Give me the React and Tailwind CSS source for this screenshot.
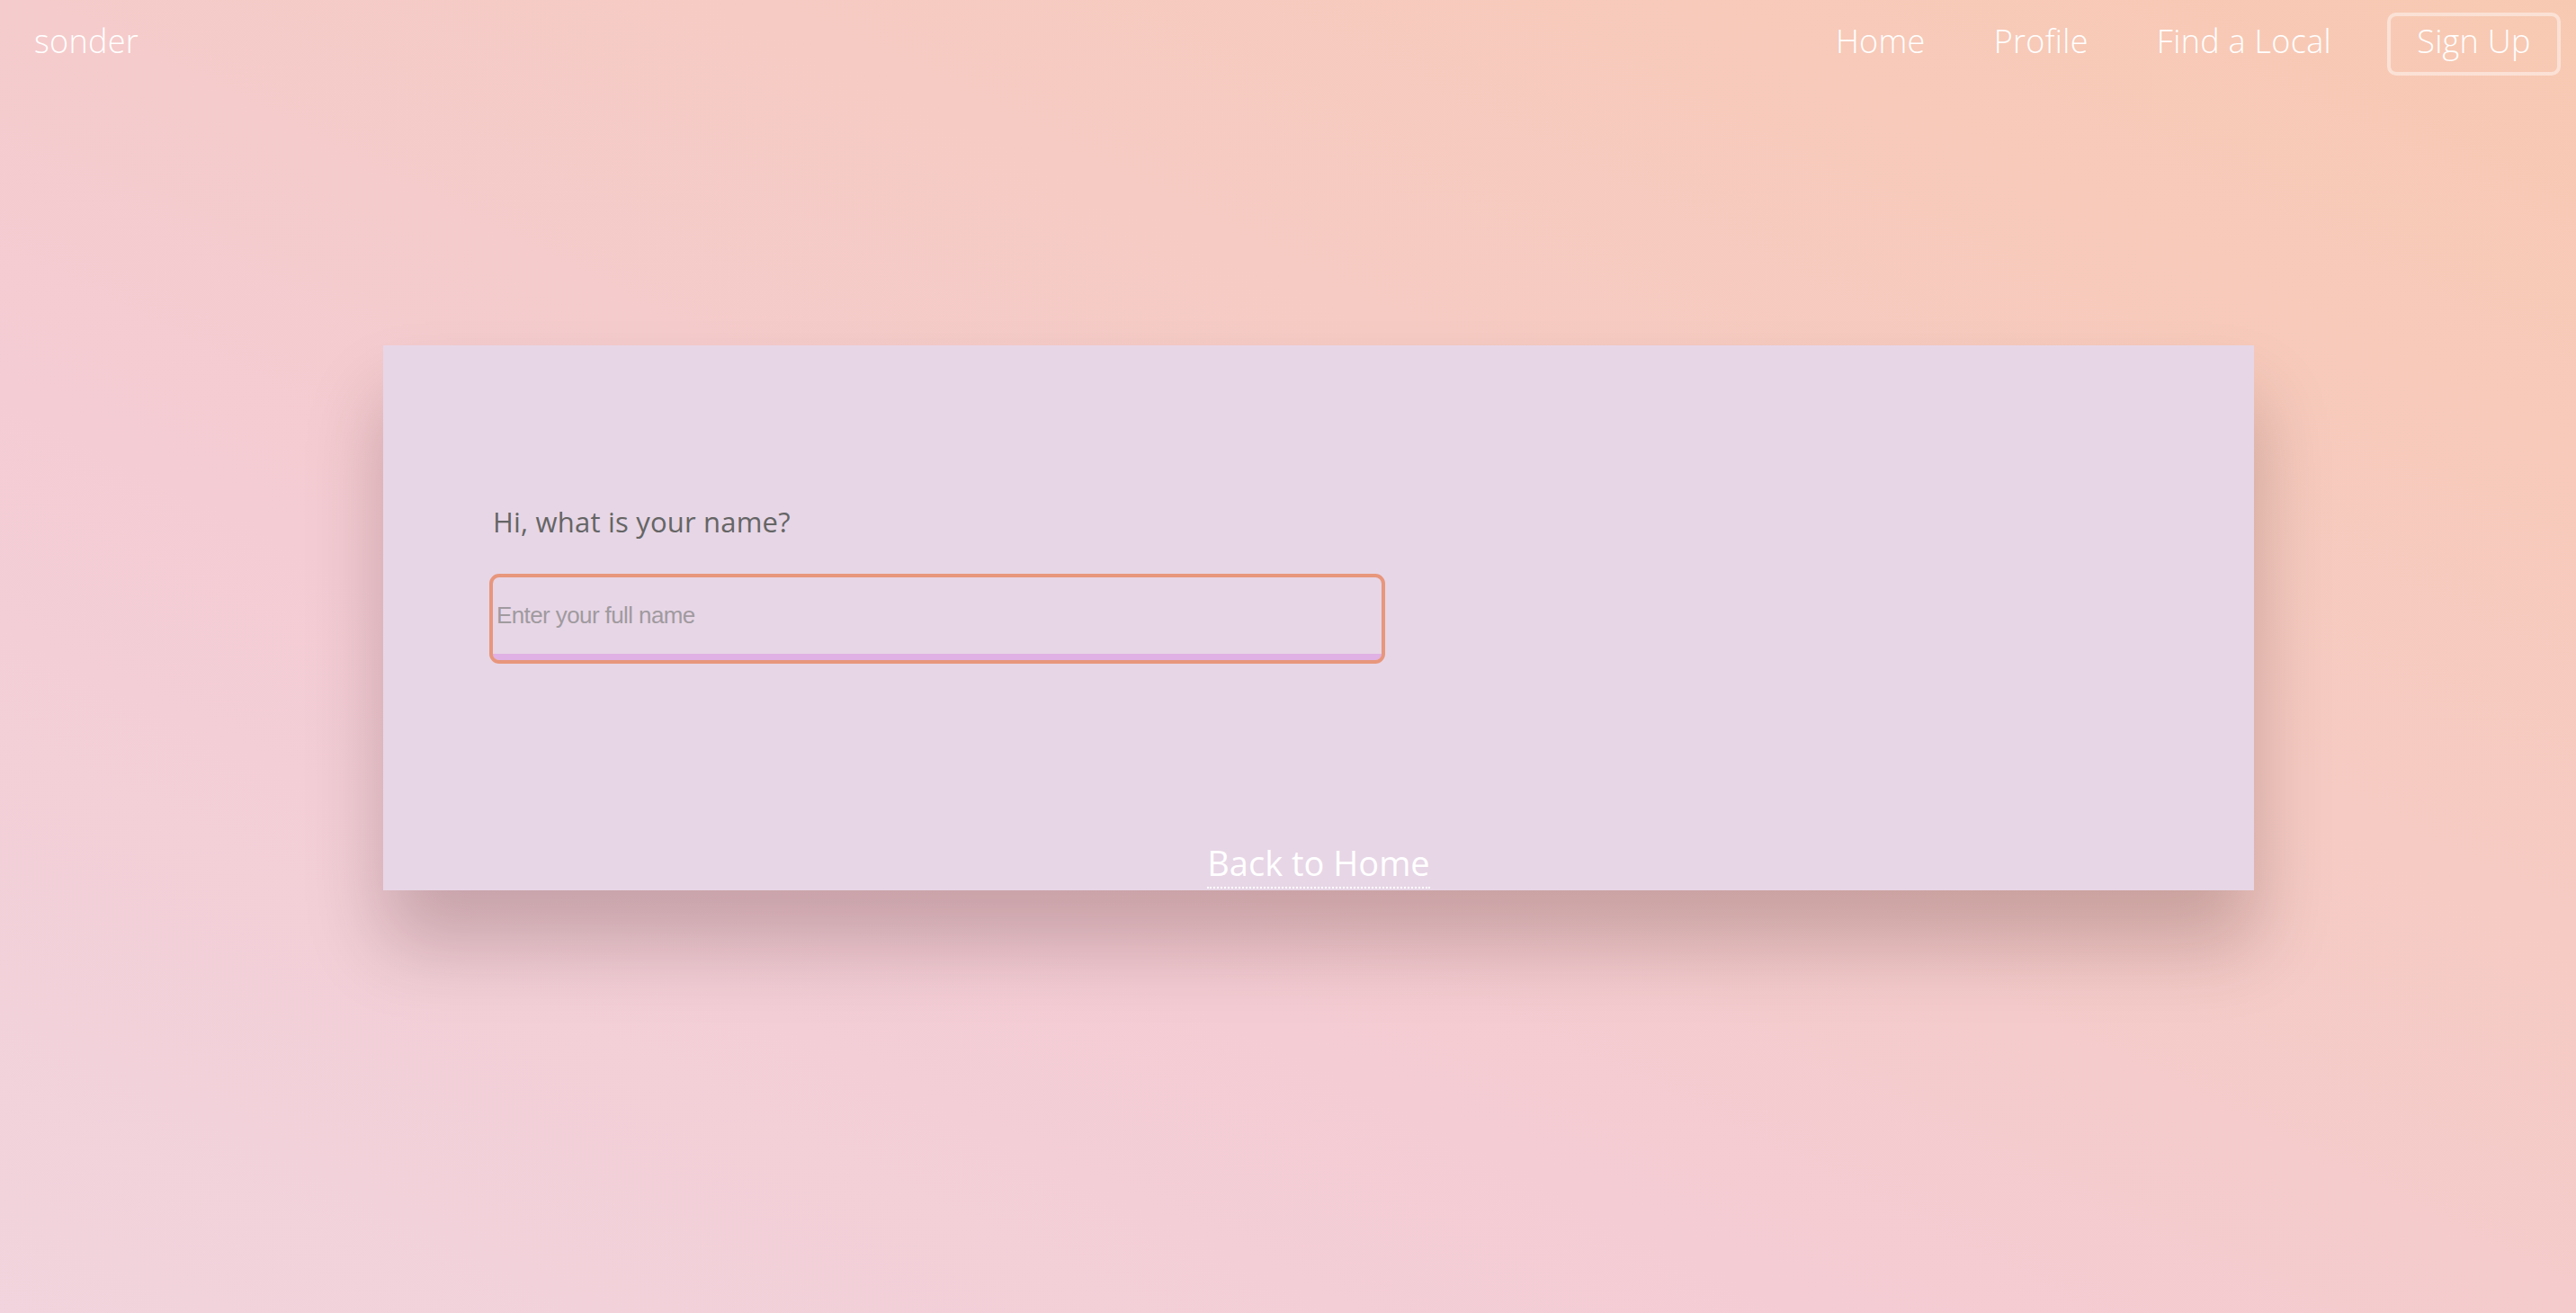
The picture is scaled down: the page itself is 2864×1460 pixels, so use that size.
import React from 'react';

/**
 * Name step — sonder onboarding
 */
const NAV_LINKS = ['Home', 'Profile', 'Find a Local'];

function Nav() {
  return (
    <nav className="flex h-[98px] items-start justify-between pl-[38px] pr-[17px] pt-[14px] text-white font-['Open_Sans',sans-serif] font-light">
      <a href="#" className="mt-[14px] text-[36px] leading-[36px] tracking-[0.3px]">sonder</a>
      <div className="flex items-start">
        {NAV_LINKS.map((label) => (
          <a key={label} href="#" className="mt-[14px] mr-[76px] text-[36px] leading-[36px] tracking-[0.3px]">
            {label}
          </a>
        ))}
        <a
          href="#"
          className="-ml-[14px] flex h-[70px] w-[193px] items-center justify-center rounded-[10px] border-4 border-white/45 pb-[6px] text-[36px] leading-[36px] tracking-[0.3px]"
        >
          Sign Up
        </a>
      </div>
    </nav>
  );
}

export default function App() {
  return (
    <div className="min-h-[1460px] overflow-hidden bg-[linear-gradient(to_top_right,#f1d4dd_0%,#f4ccd4_35%,#f6cbc3_65%,#f8c9b2_100%)]">
      <Nav />

      {/* Question card */}
      <main className="mt-[286px] ml-[426px] flex h-[606px] w-[2080px] flex-col overflow-hidden bg-[#e7d6e6] px-[122px] pt-[176px] pb-[2px] shadow-[0_60px_80px_rgba(40,10,10,0.22)]">
        <label htmlFor="fullname" className="font-['Open_Sans',sans-serif] text-[31px] leading-[40px] tracking-[0.2px] text-[#656565]">
          Hi, what is your name?
        </label>
        <input
          id="fullname"
          type="text"
          placeholder="Enter your full name"
          className="mt-[42px] h-[92px] w-[988px] rounded-[7px] border-0 border-b-[7px] border-[#dfb1e4] bg-transparent px-[4px] font-['Liberation_Sans',sans-serif] text-[26px] tracking-[-0.6px] text-[#555] outline-4 outline-[#e8967c] placeholder:text-[#a09a9f]"
        />
        <div className="flex-1" />
        <a
          href="#"
          className="self-center border-b-2 border-dotted border-white pb-[8px] font-['Open_Sans',sans-serif] text-[38px] leading-[38px] text-white"
        >
          Back to Home
        </a>
      </main>
    </div>
  );
}
